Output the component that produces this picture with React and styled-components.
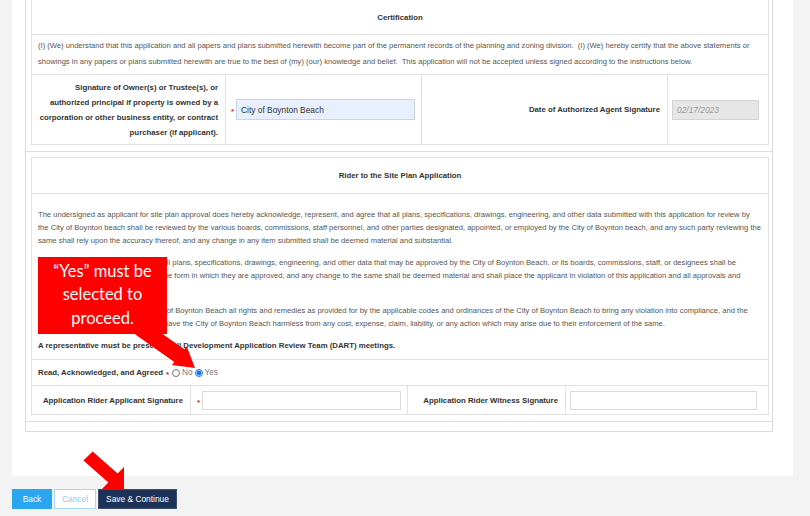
import React from "react";
import styled, { createGlobalStyle } from "styled-components";

const GlobalStyle = createGlobalStyle`
  html, body {
    margin: 0;
    padding: 0;
    background: #f3f3f3;
    font-family: "Liberation Sans", Arial, sans-serif;
    overflow: hidden;
  }
`;

const CERT_COLS = [194, 196, 246, 101];
const RIDER_COLS = [159, 217, 158, 203];

const App = () => {
  return (
    <>
      <GlobalStyle />
      <Page>
        <Panel>
          <FormBox>
            <Section>
              <FormTable>
                <colgroup>
                  {CERT_COLS.map((w, i) => (
                    <col key={i} style={{ width: w }} />
                  ))}
                </colgroup>
                <tbody>
                  <tr>
                    <HeaderCell colSpan={4} $h={35}>
                      Certification
                    </HeaderCell>
                  </tr>
                  <tr>
                    <TextCell colSpan={4} $lh={16} $fs={7.6} $pad="3px 6px 4px">
                      (I) (We) understand that this application and all papers
                      and plans submitted herewith become part of the permanent
                      records of the planning and zoning division.{"\u00a0 "}(I)
                      (We) hereby certify that the above statements or showings
                      in any papers or plans submitted herewith are true to the
                      best of (my) (our) knowledge and belief.{"\u00a0 "}This
                      application will not be accepted unless signed according
                      to the instructions below.
                    </TextCell>
                  </tr>
                  <tr>
                    <LabelCell $lh={15} $h={70}>
                      Signature of Owner(s) or Trustee(s), or authorized
                      principal if property is owned by a corporation or other
                      business entity, or contract purchaser (if applicant).
                    </LabelCell>
                    <InputCell $pad="0 6px 0 4px">
                      <FieldWrap>
                        <Required>*</Required>
                        <Field
                          $w={179}
                          $h={21}
                          $variant="filled"
                          defaultValue="City of Boynton Beach"
                        />
                      </FieldWrap>
                    </InputCell>
                    <LabelCell $lh={15}>Date of Authorized Agent Signature</LabelCell>
                    <InputCell $pad="0 7px 0 4px">
                      <FieldWrap>
                        <Field
                          $w={87}
                          $h={20}
                          $variant="disabled"
                          defaultValue="02/17/2023"
                          disabled
                        />
                      </FieldWrap>
                    </InputCell>
                  </tr>
                </tbody>
              </FormTable>
            </Section>

            <Section $top={5}>
              <FormTable>
                <colgroup>
                  {RIDER_COLS.map((w, i) => (
                    <col key={i} style={{ width: w }} />
                  ))}
                </colgroup>
                <tbody>
                  <tr>
                    <HeaderCell colSpan={4} $h={36}>
                      Rider to the Site Plan Application
                    </HeaderCell>
                  </tr>
                  <tr>
                    <TextCell colSpan={4} $lh={13} $fs={7.6} $pad="14px 6px 7px">
                      <Para>
                        The undersigned as applicant for site plan approval does
                        hereby acknowledge, represent, and agree that all plans,
                        specifications, drawings, engineering, and other data
                        submitted with this application for review by
                        <br />
                        the City of Boynton beach shall be reviewed by the
                        various boards, commissions, staff personnel, and other
                        parties designated, appointed, or employed by the City
                        of Boynton beach, and any such party reviewing the
                        <br />
                        same shall rely upon the accuracy thereof, and any
                        change in any item submitted shall be deemed material
                        and substantial.
                      </Para>
                      <Para>
                        The undersigned hereby agrees that all plans,
                        specifications, drawings, engineering, and other data
                        that may be approved by the City of Boynton Beach, or
                        its boards, commissions, staff, or designees shall be
                        <br />
                        constructed in strict compliance with the form in which
                        they are approved, and any change to the same shall be
                        deemed material and shall place the applicant in
                        violation of this application and all approvals and
                        <br />
                        permits which may be granted.
                      </Para>
                      <Para>
                        The applicant agrees to allow the City of Boynton Beach
                        all rights and remedies as provided for by the
                        applicable codes and ordinances of the City of Boynton
                        Beach to bring any violation into compliance, and the
                        <br />
                        applicant shall indemnify, defend and save the City of
                        Boynton Beach harmless from any cost, expense, claim,
                        liability, or any action which may arise due to their
                        enforcement of the same.
                      </Para>
                      <Para $bold>
                        A representative must be present at all Development
                        Application Review Team (DART) meetings.
                      </Para>
                    </TextCell>
                  </tr>
                  <tr>
                    <AgreeCell colSpan={4}>
                      <AgreeRow>
                        <strong>Read, Acknowledged, and Agreed</strong>
                        <Required>*</Required>
                        <RadioLabel>
                          <Radio type="radio" name="agree" />
                          No
                        </RadioLabel>
                        <RadioLabel>
                          <Radio type="radio" name="agree" defaultChecked />
                          Yes
                        </RadioLabel>
                      </AgreeRow>
                    </AgreeCell>
                  </tr>
                  <tr>
                    <LabelCell $lh={15} $h={29}>
                      Application Rider Applicant Signature
                    </LabelCell>
                    <InputCell $pad="0 7px 0 5px">
                      <FieldWrap>
                        <Required>*</Required>
                        <Field $w={199} $h={19} />
                      </FieldWrap>
                    </InputCell>
                    <LabelCell $lh={15}>Application Rider Witness Signature</LabelCell>
                    <InputCell $pad="0 10px 0 4px">
                      <FieldWrap>
                        <Field $w={187} $h={19} />
                      </FieldWrap>
                    </InputCell>
                  </tr>
                </tbody>
              </FormTable>
            </Section>

            <Section $top={0} $empty />
          </FormBox>
        </Panel>

        <ButtonBar>
          <Button $variant="primary" $w={40}>
            Back
          </Button>
          <Button $variant="outline" $w={42}>
            Cancel
          </Button>
          <Button $variant="dark" $w={79}>
            Save &amp; Continue
          </Button>
        </ButtonBar>

        <Callout>
          “Yes” must be
          <br />
          selected to
          <br />
          proceed.
        </Callout>

        <Annotations viewBox="0 0 810 516" width="810" height="516">
          <polygon
            fill="#ff0000"
            points="145,321.7 184.3,349.3 186.7,346.2 195,368 171.9,365 174.3,361.9 135,334.3"
          />
          <polygon
            fill="#ff0000"
            points="92.6,451.4 117.6,473.4 124,467 124,489 102,489 108.4,482.6 83.4,460.6"
          />
        </Annotations>
      </Page>
    </>
  );
};

export default App;

const Page = styled.div`
  position: relative;
  width: 810px;
  height: 516px;
  padding-left: 12px;
  box-sizing: border-box;
  overflow: hidden;
`;

const Panel = styled.div`
  width: 781px;
  box-sizing: border-box;
  margin-top: -8px;
  padding: 0 20px 44px 13px;
  background: #fff;
`;

const FormBox = styled.div`
  border: 1px solid #dcdcdc;
`;

const Section = styled.div`
  padding: ${(p) => (p.$empty ? "0" : `${p.$top ?? 6}px 4px 6px 5px`)};
  height: ${(p) => (p.$empty ? "9px" : "auto")};
  border-bottom: ${(p) => (p.$empty ? "none" : "1px solid #dcdcdc")};
`;

const FormTable = styled.table`
  width: 737px;
  table-layout: fixed;
  border-collapse: collapse;
  border: 1px solid #e2e2e2;
  color: #333;

  td {
    border: 1px solid #e2e2e2;
  }
`;

const HeaderCell = styled.td`
  height: ${(p) => p.$h - 1}px;
  padding: 0;
  text-align: center;
  font-weight: bold;
  font-size: 7.8px;
  color: #333;
`;

const TextCell = styled.td`
  padding: ${(p) => p.$pad};
  font-size: ${(p) => p.$fs}px;
  line-height: ${(p) => p.$lh}px;
  color: #555;
`;

const Para = styled.p`
  margin: 0 0 9px;
  font-weight: ${(p) => (p.$bold ? "bold" : "normal")};
  color: ${(p) => (p.$bold ? "#333" : "#555")};
  font-size: ${(p) => (p.$bold ? "7.8px" : "inherit")};

  &:last-child {
    margin-bottom: 0;
  }
`;

const LabelCell = styled.td`
  height: ${(p) => (p.$h ? `${p.$h - 1}px` : "auto")};
  padding: 0 7px 0 6px;
  text-align: right;
  font-weight: bold;
  font-size: 7.8px;
  line-height: ${(p) => p.$lh}px;
  color: #333;
`;

const InputCell = styled.td`
  padding: ${(p) => p.$pad};
  vertical-align: middle;
`;

const FieldWrap = styled.div`
  display: flex;
  align-items: center;
  flex-wrap: nowrap;
`;

const Required = styled.span`
  flex: none;
  display: inline-block;
  width: 5px;
  margin: 0 1px 0 0;
  color: #e02020;
  font-size: 8px;
  font-weight: bold;
  position: relative;
  top: 2px;
  text-align: center;
`;

const Field = styled.input`
  flex: none;
  width: ${(p) => p.$w}px;
  height: ${(p) => p.$h}px;
  box-sizing: border-box;
  margin: 0;
  padding: 0 4px;
  font-family: "Liberation Sans", Arial, sans-serif;
  font-size: 8.4px;
  font-style: ${(p) => (p.$variant === "disabled" ? "italic" : "normal")};
  color: ${(p) => (p.$variant === "disabled" ? "#999" : "#333")};
  background: ${(p) =>
    p.$variant === "filled"
      ? "#e8f0fe"
      : p.$variant === "disabled"
      ? "#e6e6e6"
      : "#fff"};
  border: 1px solid
    ${(p) =>
      p.$variant === "filled"
        ? "#c6d4e8"
        : p.$variant === "disabled"
        ? "#d4d4d4"
        : "#dadada"};
  border-radius: 0;
  outline: none;

  &:disabled {
    -webkit-text-fill-color: #999;
    opacity: 1;
  }
`;

const AgreeCell = styled.td`
  height: 25px;
  padding: 0 6px;
  font-size: 7.8px;
  color: #333;
`;

const AgreeRow = styled.div`
  display: flex;
  align-items: center;

  strong {
    margin-right: 2px;
  }
`;

const RadioLabel = styled.label`
  display: flex;
  align-items: center;
  color: #777;
  font-size: 8.2px;
  margin-right: 1px;
`;

const Radio = styled.input`
  width: 8px;
  height: 8px;
  margin: 0 2px 0 1px;
  accent-color: #1a73e8;
`;

const ButtonBar = styled.div`
  display: flex;
  gap: 2px;
  margin-top: 13px;
`;

const Button = styled.button`
  width: ${(p) => p.$w}px;
  height: 20px;
  box-sizing: border-box;
  padding: 0;
  font-family: "Liberation Sans", Arial, sans-serif;
  font-size: 8.4px;
  border-radius: 0;
  cursor: pointer;
  white-space: nowrap;
  color: ${(p) => (p.$variant === "outline" ? "#8fcdf5" : "#fff")};
  background: ${(p) =>
    p.$variant === "primary"
      ? "#2aa6f0"
      : p.$variant === "dark"
      ? "#1e3257"
      : "#fff"};
  border: 1px solid
    ${(p) =>
      p.$variant === "primary"
        ? "#2aa6f0"
        : p.$variant === "dark"
        ? "#3a4d72"
        : "#a8daf8"};
`;

const Callout = styled.div`
  position: absolute;
  left: 38px;
  top: 257px;
  width: 129px;
  height: 77px;
  box-sizing: border-box;
  padding-top: 3px;
  background: #ff0000;
  color: #fff;
  font-family: Lato, "Open Sans", sans-serif;
  font-size: 16.5px;
  line-height: 23.3px;
  text-align: center;
`;

const Annotations = styled.svg`
  position: absolute;
  left: 0;
  top: 0;
  pointer-events: none;
`;
